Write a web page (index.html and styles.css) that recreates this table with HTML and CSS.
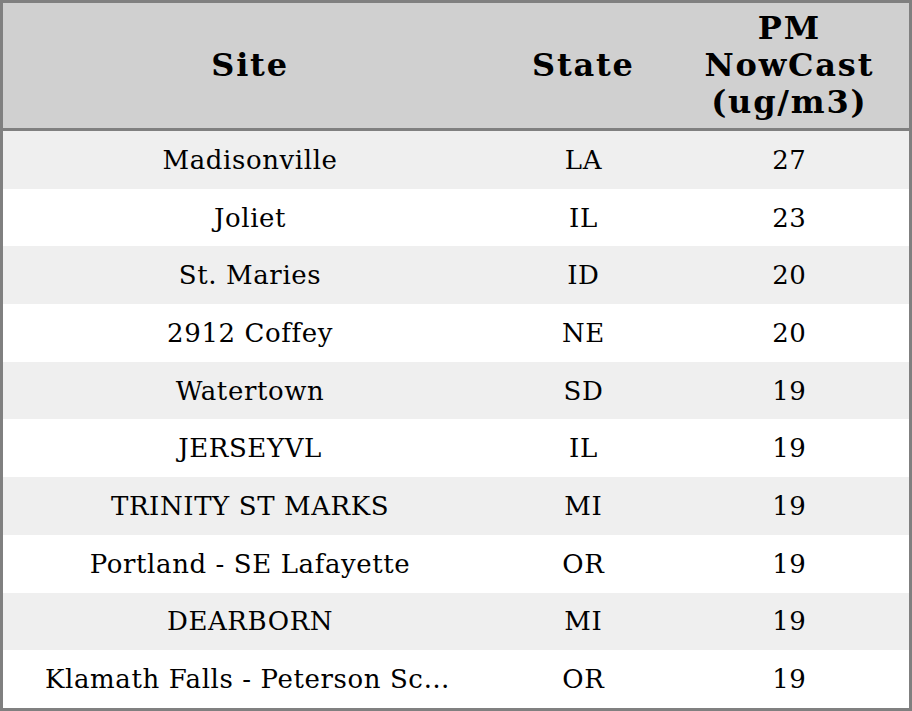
FILE: index.html
```html
<!DOCTYPE html>
<html>
<head>
<meta charset="utf-8">
<link rel="stylesheet" href="styles.css">
</head>
<body>
<table class="aq-table">
  <colgroup>
    <col class="col-site">
    <col class="col-state">
    <col class="col-pm">
  </colgroup>
  <thead>
    <tr>
      <th>Site</th>
      <th>State</th>
      <th>PM<br>NowCast<br>(ug/m3)</th>
    </tr>
  </thead>
  <tbody>
    <tr><td class="site">Madisonville</td><td>LA</td><td>27</td></tr>
    <tr><td class="site">Joliet</td><td>IL</td><td>23</td></tr>
    <tr><td class="site">St. Maries</td><td>ID</td><td>20</td></tr>
    <tr><td class="site">2912 Coffey</td><td>NE</td><td>20</td></tr>
    <tr><td class="site">Watertown</td><td>SD</td><td>19</td></tr>
    <tr><td class="site">JERSEYVL</td><td>IL</td><td>19</td></tr>
    <tr><td class="site">TRINITY ST MARKS</td><td>MI</td><td>19</td></tr>
    <tr><td class="site">Portland - SE Lafayette</td><td>OR</td><td>19</td></tr>
    <tr><td class="site">DEARBORN</td><td>MI</td><td>19</td></tr>
    <tr><td class="site">Klamath Falls - Peterson School</td><td>OR</td><td>19</td></tr>
  </tbody>
</table>
</body>
</html>
```
FILE: styles.css
```css
html, body {
  margin: 0;
  padding: 0;
  background: #ffffff;
}

.aq-table {
  width: 912px;
  height: 711px;
  border-collapse: collapse;
  table-layout: fixed;
  border: 3px solid #808080;
  font-family: "DejaVu Serif", serif;
  color: #000;
}

.col-site { width: 494px; }
.col-state { width: 172px; }
.col-pm { width: 240px; }

.aq-table th {
  background: #d0d0d0;
  font-size: 32px;
  font-weight: bold;
  letter-spacing: 1.8px;
  line-height: 37px;
  height: 125px;
  padding: 0;
  text-align: center;
  vertical-align: middle;
  border-bottom: 3px solid #808080;
}

.aq-table td {
  font-size: 26px;
  letter-spacing: 0.6px;
  height: 57.7px;
  padding: 0;
  text-align: center;
  vertical-align: middle;
  white-space: nowrap;
  overflow: hidden;
  text-overflow: ellipsis;
}

.aq-table td.site {
  padding: 0 42px;
}

.aq-table tbody tr:nth-child(odd) td {
  background: #efefef;
}
```
